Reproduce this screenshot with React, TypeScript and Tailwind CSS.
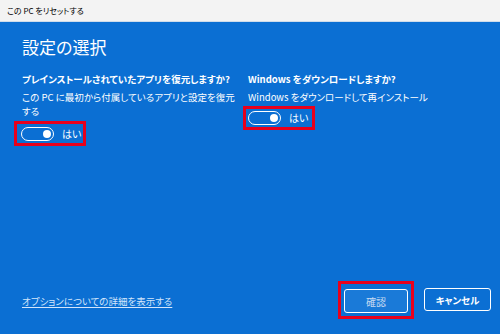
import React from 'react';

const Toggle: React.FC = () => (
  <div className="flex items-center w-[33px] h-[14px] rounded-full border-[1.5px] border-white justify-end pr-[2px]">
    <div className="w-[8px] h-[8px] rounded-full bg-white"></div>
  </div>
);

const App: React.FC = () => {
  return (
    <div
      className="w-[500px] h-[334px] flex flex-col overflow-hidden text-white [font-feature-settings:'palt']"
      style={{ fontFamily: "'Noto Sans CJK JP', 'Noto Sans', sans-serif" }}
    >
      {/* Title bar */}
      <div className="h-[22px] flex-none bg-[#f3f3f3] border-b border-[#cfdcea] flex items-center px-[7px] text-[8px] text-black">
        この PC をリセットする
      </div>

      <div className="flex-1 bg-[#0b6fd3] pl-[22px] pr-[9px] pt-[13px] flex flex-col">
        <h1 className="text-[17px] leading-[24px] font-normal">設定の選択</h1>

        <div className="grid grid-cols-[220px_230px] gap-x-[6px] mt-[13px]">
          {/* Left column */}
          <div className="flex flex-col">
            <div className="text-[9.5px] leading-[14px] font-bold">プレインストールされていたアプリを復元しますか?</div>
            <div className="text-[9.5px] leading-[14px] mt-[4px]">この PC に最初から付属しているアプリと設定を復元する</div>
            <div className="self-start -ml-[8px] mt-[3px] inline-flex items-center h-[25px] border-[3px] border-[#e8001c] pl-[4px] pr-[2px]">
              <Toggle />
              <span className="ml-[8px] text-[10px] leading-none">はい</span>
            </div>
          </div>

          {/* Right column */}
          <div className="flex flex-col">
            <div className="text-[9.5px] leading-[14px] font-bold">Windows をダウンロードしますか?</div>
            <div className="text-[9.5px] leading-[14px] mt-[4px]">Windows をダウンロードして再インストール</div>
            <div className="self-start -ml-[5px] mt-[2px] inline-flex items-center h-[24px] border-[3px] border-[#e8001c] pl-[2px] pr-[4px]">
              <Toggle />
              <span className="ml-[8px] text-[10px] leading-none">はい</span>
            </div>
          </div>
        </div>

        {/* Footer */}
        <div className="mt-auto mb-[15px] flex items-center justify-between">
          <a className="text-[9.5px] leading-[14px] text-[#d4e6fb] underline underline-offset-2 mt-[2px]">
            オプションについての詳細を表示する
          </a>
          <div className="flex items-center">
            <div className="border-[3px] border-[#e8001c] p-[3px]">
              <button className="w-[64px] h-[24px] rounded-[3px] border-[1.5px] border-white bg-[#1a7ad8] text-[10px] text-[#c6daf2]">
                確認
              </button>
            </div>
            <button className="ml-[10px] w-[67px] h-[23px] rounded-[3px] border-[1.5px] border-white bg-[#0b6fd3] text-[9.5px] font-bold text-white">
              キャンセル
            </button>
          </div>
        </div>
      </div>
    </div>
  );
};

export default App;
